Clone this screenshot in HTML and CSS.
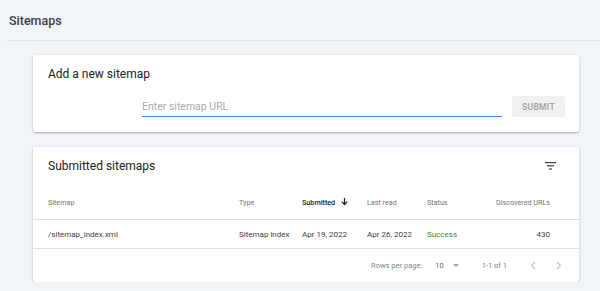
FILE: index.html
```html
<!DOCTYPE html>
<html>
<head>
    <title>Sitemaps</title>
    <link rel="stylesheet" href="styles.css">
</head>
<body>
    <div class="page-header">
        <h1>Sitemaps</h1>
    </div>
    <div class="content">
        <div class="card add-card">
            <h2>Add a new sitemap</h2>
            <div class="add-row">
                <input type="text" class="url-input" placeholder="Enter sitemap URL">
                <button class="submit" disabled>SUBMIT</button>
            </div>
        </div>

        <div class="card list-card">
            <div class="list-title">
                <h2>Submitted sitemaps</h2>
                <svg class="filter-icon" width="11" height="8" viewBox="0 0 11 8">
                    <rect x="0" y="0" width="11" height="1.2" fill="#3c4043"/>
                    <rect x="2" y="3.2" width="7" height="1.2" fill="#3c4043"/>
                    <rect x="4" y="6.4" width="3" height="1.2" fill="#3c4043"/>
                </svg>
            </div>
            <div class="row head">
                <span>Sitemap</span>
                <span>Type</span>
                <span class="sorted">Submitted
                    <svg width="7" height="8" viewBox="0 0 7 8"><path d="M3.5 0v6M0.8 3.6l2.7 2.9 2.7-2.9" stroke="#202124" stroke-width="1.2" fill="none"/></svg>
                </span>
                <span>Last read</span>
                <span>Status</span>
                <span class="num">Discovered URLs</span>
            </div>
            <div class="row data">
                <span>/sitemap_index.xml</span>
                <span>Sitemap index</span>
                <span>Apr 19, 2022</span>
                <span>Apr 26, 2022</span>
                <span class="success">Success</span>
                <span class="num">430</span>
            </div>
            <div class="pager">
                <span class="rows-label">Rows per page:</span>
                <span class="rows-value">10</span>
                <svg class="caret" width="6" height="3" viewBox="0 0 6 3"><path d="M0 0h6L3 3z" fill="#9aa0a6"/></svg>
                <span class="range">1-1 of 1</span>
                <svg class="chev" width="6" height="9" viewBox="0 0 6 9"><path d="M5 1L1.5 4.5 5 8" stroke="#bdc1c6" stroke-width="1.1" fill="none"/></svg>
                <svg class="chev" width="6" height="9" viewBox="0 0 6 9"><path d="M1 1l3.5 3.5L1 8" stroke="#bdc1c6" stroke-width="1.1" fill="none"/></svg>
            </div>
        </div>
    </div>
</body>
</html>
```

FILE: styles.css
```css
body {
    margin: 0;
    background-color: #f1f4f9;
    font-family: Roboto, "Liberation Sans", sans-serif;
    color: #202124;
}

.page-header {
    height: 40px;
    margin-left: 7px;
    padding-left: 2px;
    border-bottom: 1px solid #e1e5ec;
    display: flex;
    align-items: center;
}

.page-header h1 {
    margin: 0;
    font-size: 12.5px;
    font-weight: 500;
    color: #3c4043;
}

.content {
    padding: 14px 0 0 33px;
}

.card {
    width: 546px;
    background-color: #fff;
    border-radius: 2px;
    box-shadow: 0 1px 2px rgba(60, 64, 67, 0.3), 0 1px 3px rgba(60, 64, 67, 0.1);
    box-sizing: border-box;
}

.card h2 {
    margin: 0;
    font-size: 12px;
    font-weight: 400;
    line-height: 16px;
    color: #202124;
}

.add-card {
    height: 77px;
    padding: 11px 14px 0 15px;
}

.add-row {
    display: flex;
    justify-content: flex-end;
    align-items: flex-end;
    gap: 10px;
    margin-top: 14px;
}

.url-input {
    width: 360px;
    height: 20px;
    padding: 0;
    border: none;
    border-bottom: 1px solid #4285f4;
    font-family: inherit;
    font-size: 10.5px;
    color: #202124;
    outline: none;
    box-sizing: border-box;
}

.url-input::placeholder {
    color: #a7abaf;
}

.submit {
    width: 53px;
    height: 21px;
    border: none;
    border-radius: 2px;
    background-color: #f1f1f1;
    color: #9e9e9e;
    font-family: inherit;
    font-size: 8.5px;
    font-weight: 500;
    letter-spacing: 0.3px;
    padding: 0;
}

.list-card {
    margin-top: 15px;
    height: 135px;
}

.list-title {
    display: flex;
    justify-content: space-between;
    align-items: center;
    padding: 11px 23px 0 15px;
}

.filter-icon {
    display: block;
}

.row {
    display: grid;
    grid-template-columns: 191px 63px 65px 60px 60px 1fr;
    align-items: center;
    padding: 0 29px 0 15px;
    border-bottom: 1px solid #e0e0e0;
}

.row.head {
    margin-top: 11px;
    height: 34px;
    font-size: 7.2px;
    color: #70757a;
}

.row.data {
    height: 28px;
    font-size: 8px;
    color: #3c4043;
}

.sorted {
    color: #202124;
    font-weight: 500;
    display: flex;
    align-items: center;
    gap: 6px;
}

.num {
    text-align: right;
}

.success {
    color: #1e8e3e;
}

.pager {
    display: flex;
    align-items: center;
    justify-content: flex-end;
    height: 33px;
    padding-right: 17px;
    font-size: 7.5px;
    color: #80868b;
}

.rows-value {
    margin-left: 13px;
    color: #5f6368;
}

.caret {
    margin-left: 9px;
}

.range {
    margin-left: 23px;
}

.chev {
    margin-left: 23px;
}

.chev + .chev {
    margin-left: 20px;
}
```
